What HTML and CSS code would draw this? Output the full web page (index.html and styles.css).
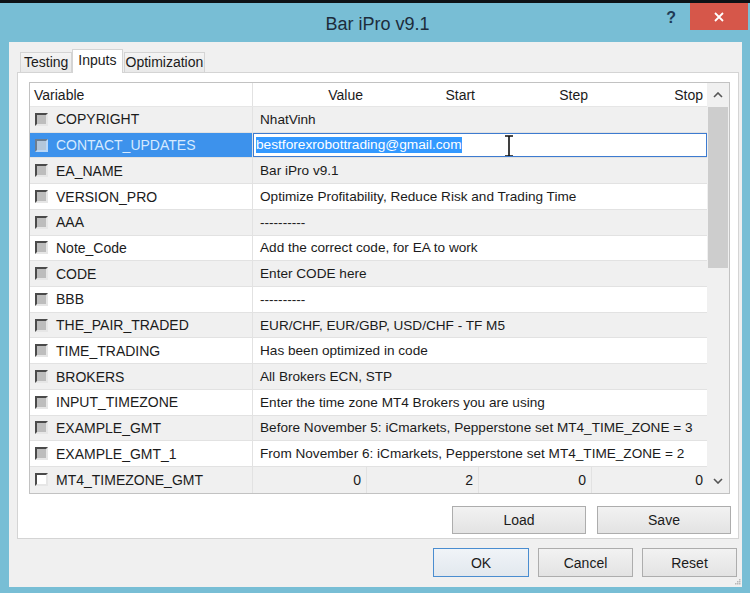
FILE: index.html
```html
<!DOCTYPE html>
<html lang="en">
<head>
  <meta charset="UTF-8">
  <meta name="viewport" content="width=device-width, initial-scale=1.0">
  <title>Bar iPro v9.1</title>
  <link rel="stylesheet" href="styles.css">
</head>
<body>
  <div class="titlebar">
    <div class="title">Bar iPro v9.1</div>
    <div class="controls">
      <span class="help">?</span>
      <span class="close">
        <svg width="12" height="12" viewBox="0 0 12 12"><path d="M2 2 L10 10 M10 2 L2 10" stroke="#fff" stroke-width="1.8" fill="none"/></svg>
      </span>
    </div>
  </div>

  <div class="window">
    <div class="tabs">
      <div class="tab">Testing</div>
      <div class="tab active">Inputs</div>
      <div class="tab opt">Optimization</div>
    </div>

    <div class="panel">
      <div class="table">
        <div class="grid">
          <div class="row head">
            <div class="cell var">Variable</div>
            <div class="cell right">Value</div>
            <div class="cell right">Start</div>
            <div class="cell right">Step</div>
            <div class="cell right">Stop</div>
          </div>

          <div class="row odd">
            <div class="cell var"><span class="chk"></span>COPYRIGHT</div>
            <div class="cell val">NhatVinh</div>
          </div>
          <div class="row selected">
            <div class="cell var"><span class="chk"></span>CONTACT_UPDATES</div>
            <div class="cell val edit">
              <span class="sel">bestforexrobottrading@gmail.com</span>
              <svg class="ibeam" width="10" height="22" viewBox="0 0 10 22"><path d="M1 1 H9 M5 1 V21 M1 21 H9" stroke="#111" stroke-width="1.6" fill="none"/></svg>
            </div>
          </div>
          <div class="row odd">
            <div class="cell var"><span class="chk"></span>EA_NAME</div>
            <div class="cell val">Bar iPro v9.1</div>
          </div>
          <div class="row">
            <div class="cell var"><span class="chk"></span>VERSION_PRO</div>
            <div class="cell val">Optimize Profitability, Reduce Risk and Trading Time</div>
          </div>
          <div class="row odd">
            <div class="cell var"><span class="chk"></span>AAA</div>
            <div class="cell val">----------</div>
          </div>
          <div class="row">
            <div class="cell var"><span class="chk"></span>Note_Code</div>
            <div class="cell val">Add the correct code, for EA to work</div>
          </div>
          <div class="row odd">
            <div class="cell var"><span class="chk"></span>CODE</div>
            <div class="cell val">Enter CODE here</div>
          </div>
          <div class="row">
            <div class="cell var"><span class="chk"></span>BBB</div>
            <div class="cell val">----------</div>
          </div>
          <div class="row odd">
            <div class="cell var"><span class="chk"></span>THE_PAIR_TRADED</div>
            <div class="cell val">EUR/CHF, EUR/GBP, USD/CHF - TF M5</div>
          </div>
          <div class="row">
            <div class="cell var"><span class="chk"></span>TIME_TRADING</div>
            <div class="cell val">Has been optimized in code</div>
          </div>
          <div class="row odd">
            <div class="cell var"><span class="chk"></span>BROKERS</div>
            <div class="cell val">All Brokers ECN, STP</div>
          </div>
          <div class="row">
            <div class="cell var"><span class="chk"></span>INPUT_TIMEZONE</div>
            <div class="cell val">Enter the time zone MT4 Brokers you are using</div>
          </div>
          <div class="row odd">
            <div class="cell var"><span class="chk"></span>EXAMPLE_GMT</div>
            <div class="cell val">Before November 5: iCmarkets, Pepperstone set MT4_TIME_ZONE = 3</div>
          </div>
          <div class="row">
            <div class="cell var"><span class="chk"></span>EXAMPLE_GMT_1</div>
            <div class="cell val">From November 6: iCmarkets, Pepperstone set MT4_TIME_ZONE = 2</div>
          </div>
          <div class="row odd nums">
            <div class="cell var"><span class="chk blank"></span>MT4_TIMEZONE_GMT</div>
            <div class="cell right">0</div>
            <div class="cell right">2</div>
            <div class="cell right">0</div>
            <div class="cell right">0</div>
          </div>
        </div>

        <div class="vscroll">
          <div class="arrow">
            <svg width="10" height="6" viewBox="0 0 10 6"><path d="M1 5 L5 1 L9 5" stroke="#555" stroke-width="1.6" fill="none"/></svg>
          </div>
          <div class="track"><div class="thumb"></div></div>
          <div class="arrow">
            <svg width="10" height="6" viewBox="0 0 10 6"><path d="M1 1 L5 5 L9 1" stroke="#555" stroke-width="1.6" fill="none"/></svg>
          </div>
        </div>
      </div>

      <div class="panel-actions">
        <button class="btn wide">Load</button>
        <button class="btn wide">Save</button>
      </div>
    </div>

    <div class="footer">
      <button class="btn default">OK</button>
      <button class="btn">Cancel</button>
      <button class="btn">Reset</button>
    </div>

    <svg class="grip" width="6" height="6" viewBox="0 0 6 6"><rect x="4" y="0" width="1.5" height="1.5" fill="#b8b8b8"/><rect x="2" y="2" width="1.5" height="1.5" fill="#b8b8b8"/><rect x="4" y="2" width="1.5" height="1.5" fill="#b8b8b8"/><rect x="0" y="4" width="1.5" height="1.5" fill="#b8b8b8"/><rect x="2" y="4" width="1.5" height="1.5" fill="#b8b8b8"/><rect x="4" y="4" width="1.5" height="1.5" fill="#b8b8b8"/></svg>
  </div>
</body>
</html>
```

FILE: styles.css
```css
body {
  margin: 0;
  height: 593px;
  overflow: hidden;
  box-sizing: border-box;
  border-top: 3px solid #0e1216;
  background: #78bed5;
  font-family: "Liberation Sans", Arial, sans-serif;
  font-size: 14px;
  color: #1b1b1b;
}
.titlebar {
  height: 39px;
  display: grid;
  grid-template-columns: 1fr auto 1fr;
  align-items: start;
}
.title {
  grid-column: 2;
  margin-left: 5px;
  padding-top: 11px;
  font-size: 18px;
  color: #1d2c3b;
}
.controls {
  grid-column: 3;
  justify-self: end;
  display: flex;
  align-items: flex-start;
  margin-right: 2px;
}
.help {
  font-weight: bold;
  font-size: 16px;
  color: #1f3a55;
  padding-top: 6px;
  margin-right: 14px;
}
.close {
  width: 58px;
  height: 27px;
  background: #d6574a;
  display: flex;
  justify-content: center;
  align-items: center;
}

.window {
  position: relative;
  height: 545px;
  margin: 0 8px 0 9px;
  padding: 7px 3px 0 8px;
  box-sizing: border-box;
  background: #f0f0f0;
}
.tabs {
  display: flex;
  align-items: flex-end;
  height: 23px;
  margin-left: 3px;
}
.tab {
  height: 19px;
  line-height: 19px;
  padding: 0 3px;
  border: 1px solid #d4d4d4;
  border-bottom: none;
  background: linear-gradient(#f4f4f4, #e9e9e9);
}
.tab.opt {
  padding: 0 1px;
  margin-left: 1px;
}
.tab.active {
  height: 23px;
  line-height: 21px;
  padding: 0 5px;
  background: #fff;
  position: relative;
  z-index: 1;
  margin-bottom: -1px;
}
.panel {
  height: 467px;
  box-sizing: border-box;
  border: 1px solid #d4d4d4;
  background: #fff;
  padding: 9px 8px 0 11px;
}

.table {
  display: flex;
  border: 1px solid #c2c2c2;
}
.grid {
  width: 677px;
}
.row {
  display: grid;
  grid-template-columns: 223px 1fr;
  height: 25.73px;
  box-sizing: border-box;
  border-bottom: 1px solid #e2e2e2;
  background: #fff;
}
.row.odd {
  background: #f0f0f0;
}
.row.head,
.row.nums {
  grid-template-columns: 223px 114px 112px 113px 115px;
}
.row.head {
  height: 24px;
  background: #fff;
  border-bottom-color: #e6e6e6;
}
.row.nums {
  border-bottom: none;
}
.cell {
  display: flex;
  align-items: center;
  white-space: nowrap;
  overflow: hidden;
}
.cell.var {
  padding-left: 5px;
  border-right: 1px solid #e2e2e2;
}
.row.head .cell.var {
  padding-left: 4px;
}
.cell.val {
  padding-left: 7px;
  font-size: 13.6px;
}
.cell.right {
  justify-content: flex-end;
  padding-right: 4px;
}
.row.nums .cell.right {
  padding-right: 5px;
  border-right: 1px solid #e2e2e2;
}
.row.nums .cell.right:last-child {
  border-right: none;
  padding-right: 4px;
}
.chk {
  width: 9px;
  height: 9px;
  margin-right: 8px;
  border: 2px solid;
  border-color: #4a4a4a #e6e6e6 #e6e6e6 #4a4a4a;
  background: #bdbdbd;
  flex: none;
}
.chk.blank {
  background: #fff;
}

.row.selected .cell.var {
  background: #3d92ec;
  color: #d6eaff;
}
.row.selected .chk {
  border-color: #6c7d90 #b9d7f7 #b9d7f7 #6c7d90;
  background: #b3c6da;
}
.cell.edit {
  position: relative;
  padding-left: 2px;
  border: 1px solid #3d7bd0;
  background: #fff;
  font-size: 13.7px;
}
.sel {
  background: #3399ff;
  color: #fff;
  line-height: 16px;
}
.ibeam {
  position: absolute;
  left: 250px;
  top: 1px;
}

.vscroll {
  width: 22px;
  display: flex;
  flex-direction: column;
  background: #f0f0f0;
}
.arrow {
  height: 24px;
  display: flex;
  justify-content: center;
  align-items: center;
}
.track {
  flex: 1;
}
.thumb {
  height: 161px;
  margin: 0 1px;
  background: #cdcdcd;
}

.panel-actions {
  display: flex;
  justify-content: flex-end;
  gap: 11px;
  margin-top: 12px;
  margin-right: -1px;
}
.btn {
  width: 95px;
  height: 29px;
  padding: 0;
  border: 1px solid #adadad;
  background: linear-gradient(#f2f2f2, #e3e3e3);
  font-family: "Liberation Sans", Arial, sans-serif;
  font-size: 14px;
  color: #1b1b1b;
}
.btn.wide {
  width: 134px;
  height: 28px;
}
.btn.default {
  width: 96px;
  border-color: #4a8dd0;
  background: linear-gradient(#f0f4f8, #e2e8ee);
}
.footer {
  display: flex;
  justify-content: flex-end;
  gap: 9px;
  margin-top: 9px;
  margin-right: 2px;
}
.grip {
  position: absolute;
  right: 1px;
  bottom: 2px;
}
```
